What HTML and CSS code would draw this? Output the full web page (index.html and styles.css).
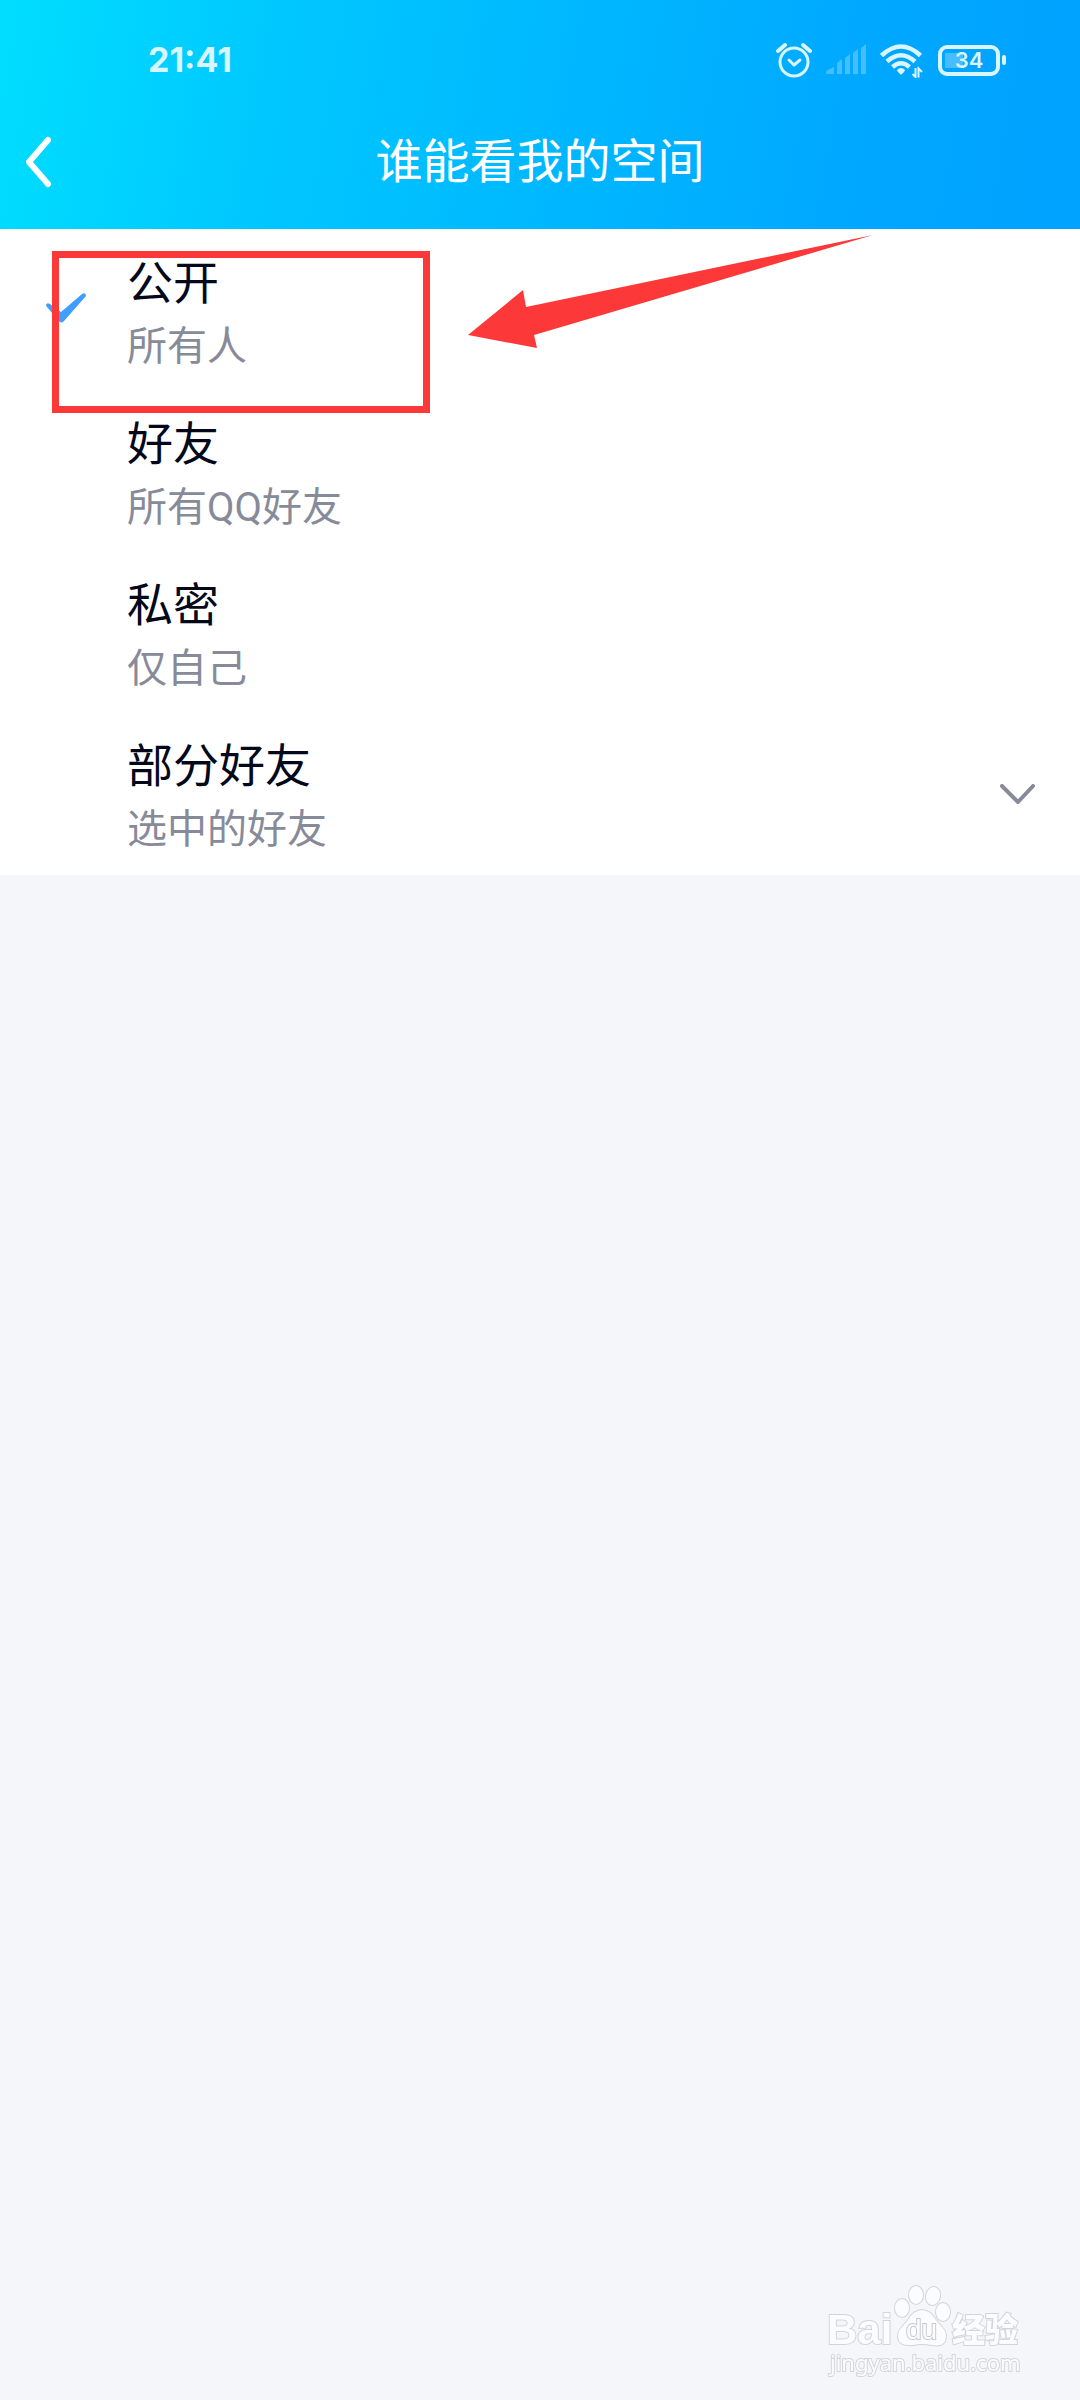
FILE: index.html
```html
<!DOCTYPE html>
<html lang="zh-CN">
<head>
<meta charset="utf-8">
<meta name="viewport" content="width=device-width, initial-scale=1">
<title>谁能看我的空间</title>
<link rel="stylesheet" href="styles.css">
</head>
<body>
<header class="header">
  <div class="status">
    <time class="clock">21:41</time>
    <div class="status-icons">
      <svg width="36" height="36" viewBox="0 0 36 36" fill="none" stroke="currentColor" stroke-width="3" stroke-linecap="round" stroke-linejoin="round" aria-hidden="true">
        <circle cx="18" cy="20" r="14"/>
        <path d="M13 18l5 5 6-5"/>
        <path d="M2 9L9 3M27 3l7 6" stroke-width="4"/>
      </svg>
      <svg class="signal" width="40" height="36" viewBox="0 0 40 36" fill="currentColor" aria-hidden="true">
        <path d="M0 30.500Q0 29 2 28l6-3v7H1.500Q0 32 0 30.500zM11 21l5-4v15h-5zM19 16l5-4v20h-5zM27 11l5-4v25h-5zM35 6l5-4v30h-5z"/>
      </svg>
      <svg width="44" height="36" viewBox="0 0 44 36" fill="none" stroke="currentColor" stroke-width="5" aria-hidden="true">
        <path d="M1.500 13.500Q21-4.500 40.500 13.500M7 19.500Q21 7 35 19.500M12.500 25Q21 17.500 29.500 25" stroke-width="4.500"/>
        <path d="M17 28q4-4 8 0 0 1-3 4-1 1-2 0-3-3-3-4z" fill="currentColor" stroke="none"/>
        <path d="M35.500 26v9L32.500 32M38.500 35.500V26.500l3.500 3.500" stroke-width="2"/>
      </svg>
      <span class="battery"><span class="battery-level">34</span></span>
    </div>
  </div>
  <nav class="nav">
    <button class="back" type="button" aria-label="返回">
      <svg width="26" height="52" viewBox="0 0 26 52" fill="none" stroke="currentColor" stroke-width="6" stroke-linecap="round" stroke-linejoin="round" aria-hidden="true"><path d="M22 4L3 26l19 22"/></svg>
    </button>
    <h1 class="title">谁能看我的空间</h1>
  </nav>
</header>
<main class="options">
  <label class="option">
    <input class="option-radio" type="radio" name="visibility" checked>
    <span class="option-text"><span class="option-name">公开</span><span class="option-note">所有人</span></span>
  </label>
  <label class="option">
    <input class="option-radio" type="radio" name="visibility">
    <span class="option-text"><span class="option-name">好友</span><span class="option-note">所有QQ好友</span></span>
  </label>
  <label class="option">
    <input class="option-radio" type="radio" name="visibility">
    <span class="option-text"><span class="option-name">私密</span><span class="option-note">仅自己</span></span>
  </label>
  <label class="option">
    <input class="option-radio" type="radio" name="visibility">
    <span class="option-text"><span class="option-name">部分好友</span><span class="option-note">选中的好友</span></span>
    <svg class="chevron" width="36" height="22" viewBox="0 0 36 22" fill="none" stroke="currentColor" stroke-width="4" stroke-linecap="round" stroke-linejoin="round" aria-hidden="true"><path d="M2 2l16 16L33 2"/></svg>
  </label>
  <div class="highlight"></div>
  <svg class="arrow" width="406" height="114" viewBox="0 0 406 114" aria-hidden="true"><path d="M0 100L55 55l3 17L405 0 66 100l3 13z" fill="#fc3838"/></svg>
</main>
<footer class="watermark">
  <svg width="200" height="96" viewBox="0 0 200 96" role="img" aria-label="Baidu 经验 jingyan.baidu.com">
    <g class="mark">
      <text class="mark-bai" x="1" y="60">Bai</text>
      <ellipse cx="76" cy="24" rx="7" ry="9"/>
      <ellipse cx="90" cy="11" rx="7" ry="9"/>
      <ellipse cx="107" cy="12" rx="7" ry="9" transform="rotate(12 107 12)"/>
      <ellipse cx="117" cy="28" rx="7" ry="9"/>
      <path d="M96 26q8 0 14 10c5 7 10 9 10 16 0 10-8 10-14 9q-10-2-19 0c-8 1-15-1-15-9 0-7 5-9 10-16q6-10 14-10z"/>
      <text class="mark-du" x="80" y="55">du</text>
      <text class="mark-cn" x="126" y="58">经验</text>
      <text class="mark-url" x="4" y="87">jingyan.baidu.com</text>
    </g>
  </svg>
</footer>
</body>
</html>
```
FILE: styles.css
```css
* {
  box-sizing: border-box;
}

body {
  margin: 0;
  min-height: 100vh;
  background: #f4f6fa;
  color: #03081a;
  font-family: Roboto, "Noto Sans CJK SC", sans-serif;
}

.header {
  background: linear-gradient(100deg, #00deff 0%, #00c7ff 26%, #00a6ff 82%, #00a3ff 100%);
  color: #fff;
}

.status {
  display: flex;
  align-items: center;
  justify-content: space-between;
  height: 96px;
  padding: 24px 74px 0 148px;
  color: #d9f5ff;
}

.clock {
  font: 700 34px/40px Inter, sans-serif;
}

.status-icons {
  display: flex;
  align-items: center;
  gap: 14px;
}

.signal {
  color: #45bdff;
}

.battery {
  position: relative;
  display: flex;
  align-items: center;
  justify-content: center;
  width: 62px;
  height: 31px;
  margin-right: 6px;
  border: 4px solid currentColor;
  border-radius: 9px;
  background: linear-gradient(#45bdff, #45bdff) 3px 4px / 18px 15px no-repeat;
}

.battery::after {
  content: "";
  position: absolute;
  right: -10px;
  top: 6px;
  width: 4px;
  height: 10px;
  border-radius: 2px;
  background: currentColor;
}

.battery-level {
  font: 600 22px/24px Inter, sans-serif;
}

.nav {
  display: grid;
  grid-template-columns: 1fr auto 1fr;
  align-items: center;
  height: 133px;
  padding: 0 26px 2px;
}

.back {
  display: flex;
  justify-self: start;
  padding: 0;
  border: 0;
  background: none;
  color: inherit;
}

.title {
  margin: 0;
  font-size: 47px;
  font-weight: 400;
  line-height: 64px;
}

.options {
  position: relative;
  padding-bottom: 2px;
  background: #fff;
}

.option {
  display: flex;
  align-items: center;
  gap: 41px;
  padding: 22px 44px 13px 46px;
}

.option-radio {
  flex: none;
  appearance: none;
  width: 40px;
  height: 42px;
  margin: 0;
}

.option-radio:checked {
  background: #409eff;
  clip-path: path("M0 12Q1 9 4 11L15 19 36 1Q40-1 40 3L18 28Q15 31 13 28L1 14Q0 13 0 12Z");
}

.option-text {
  display: flex;
  flex: 1;
  flex-direction: column;
  gap: 2px;
}

.option-name {
  font-size: 46px;
  line-height: 64px;
}

.option-note {
  color: #878b99;
  font-size: 40px;
  line-height: 60px;
}

.chevron {
  color: #878b99;
  margin-bottom: 4px;
}

.highlight {
  position: absolute;
  left: 52px;
  top: 22px;
  width: 378px;
  height: 162px;
  border: 7px solid #fc3838;
}

.arrow {
  position: absolute;
  left: 468px;
  top: 6px;
}

.watermark {
  position: fixed;
  right: 54px;
  bottom: 20px;
}

.watermark svg {
  display: block;
  overflow: visible;
}

.mark {
  fill: #fcfcfe;
  stroke: #d3d5d9;
  stroke-width: 2px;
  paint-order: stroke;
}

.mark-bai {
  font: 700 42px "Liberation Sans", sans-serif;
}

.mark-du {
  font: 400 28px "Liberation Sans", sans-serif;
  stroke: #c8cace;
}

.mark-cn {
  font: 900 33px "Noto Sans CJK SC", sans-serif;
}

.mark-url {
  font: 400 22px "Noto Sans", sans-serif;
}
```
